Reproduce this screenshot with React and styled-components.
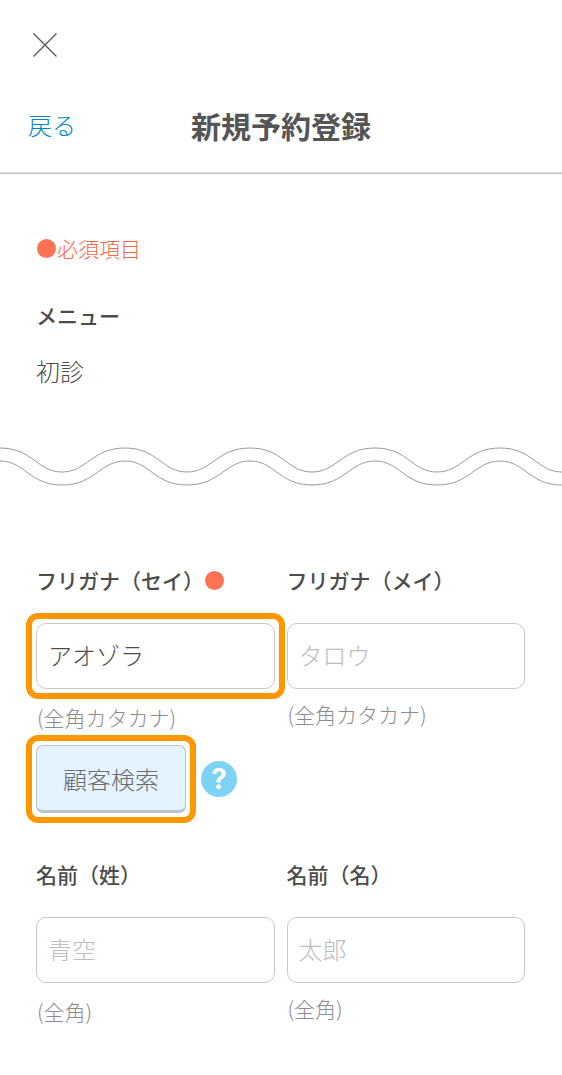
import React from "react";
import styled, { createGlobalStyle, css } from "styled-components";

const GlobalStyle = createGlobalStyle`
  *,
  *::before,
  *::after {
    box-sizing: border-box;
  }
  body {
    margin: 0;
    background-color: #fff;
    color: #4c4c4c;
    font-family: "Noto Sans CJK JP", sans-serif;
    font-weight: 300;
  }
  button,
  input {
    font: inherit;
    color: inherit;
  }
`;

const Page = styled.div`
  padding-bottom: 47px;
`;
const Header = styled.header`
  padding: 33px 28px 26px;
  border-bottom: 1px solid #b9c2c1;
  box-shadow: inset 0 -1px #dde2e1;
`;
const CloseButton = styled.button`
  display: block;
  width: 24px;
  height: 24px;
  margin-left: 5px;
  padding: 0;
  border: none;
  background: none;
  cursor: pointer;
  svg {
    display: block;
  }
`;
const TitleBar = styled.div`
  display: grid;
  grid-template-columns: 1fr auto 1fr;
  align-items: center;
  margin-top: 46px;
  line-height: 44px;
`;
const BackLink = styled.a`
  color: #0088c4;
  font-size: 24px;
  text-decoration: none;
`;
const Title = styled.h1`
  margin: 0;
  color: #555;
  font-size: 30px;
  font-weight: 700;
`;
const Section = styled.section`
  padding: ${props => props.$top}px 37px 0 36px;
`;
const RequiredNote = styled.p`
  display: flex;
  align-items: center;
  gap: 1px;
  margin: 0;
  padding-left: 1px;
  color: #ff6644;
  font-size: 21px;
  line-height: 32px;
`;
const RequiredDot = styled.span`
  flex: none;
  width: 19px;
  height: 19px;
  border-radius: 50%;
  background-color: #ff7254;
`;
const MenuTitle = styled.h2`
  margin: 35px 0 24px;
  font-size: 21px;
  font-weight: 500;
  line-height: 32px;
`;
const MenuValue = styled.p`
  margin: 0;
  font-size: 24px;
  line-height: 32px;
`;
const WaveSvg = styled.svg`
  display: block;
  width: 100%;
  height: 39px;
  margin-top: 60px;
`;
const FieldGrid = styled.div`
  display: grid;
  grid-template-columns: 1fr 1fr;
  gap: 45px 12px;
`;
const Label = styled.label`
  display: flex;
  align-items: center;
  gap: 1px;
  font-size: 21px;
  font-weight: 500;
  line-height: 32px;
  white-space: nowrap;
`;
const Highlight = styled.div`
  position: relative;
  ${props =>
    props.$active &&
    css`
      &::after {
        content: "";
        position: absolute;
        inset: -10px;
        border: 6px solid #ff9800;
        border-radius: 12px;
        pointer-events: none;
      }
    `}
`;
const InputBox = styled(Highlight)`
  margin-top: 27px;
`;
const TextInput = styled.input`
  display: block;
  width: 100%;
  height: 66px;
  padding: 0 12px 4px 11px;
  border: 1px solid #c8c8c8;
  border-radius: 10px;
  background-color: #fff;
  font-size: 24px;
  outline: none;
  &::placeholder {
    color: #bdbdbd;
    opacity: 1;
  }
`;
const Hint = styled.p`
  margin: ${props => props.$gap}px 0 0;
  padding-left: 1px;
  color: #8c8c8c;
  font-size: 21px;
  line-height: 32px;
`;
const SearchRow = styled.div`
  display: flex;
  align-items: center;
  gap: 15px;
  margin-top: 12px;
`;
const SearchButton = styled.button`
  display: block;
  width: 150px;
  height: 68px;
  padding: 0;
  border: 1px solid #b7c3cc;
  border-bottom-width: 3px;
  border-radius: 7px;
  background-color: #e5f3ff;
  color: #6c6c6c;
  font-size: 24px;
  cursor: pointer;
`;
const HelpButton = styled.button`
  width: 36px;
  height: 36px;
  padding: 0;
  border: none;
  border-radius: 50%;
  background-color: #7dd3f3;
  color: #fff;
  font-family: Inter, sans-serif;
  font-size: 28px;
  font-weight: 700;
  line-height: 36px;
  cursor: pointer;
`;

const Wave = () => (
  <WaveSvg aria-hidden="true">
    <defs>
      <pattern id="wave" width="125" height="39" patternUnits="userSpaceOnUse">
        <g fill="none" stroke="#999" strokeWidth="1">
          <path d="M0 1C33 1 37 25 62 25S92 1 125 1" />
          <path d="M0 14C25 14 29 38 62 38S100 14 125 14" />
        </g>
      </pattern>
    </defs>
    <rect width="100%" height="39" fill="url(#wave)" />
  </WaveSvg>
);

const Field = ({
  id,
  label,
  required,
  highlighted,
  hint,
  hintGap,
  children,
  ...inputProps
}) => (
  <div>
    <Label htmlFor={id}>
      {label}
      {required ? <RequiredDot /> : null}
    </Label>
    <InputBox $active={highlighted}>
      <TextInput id={id} type="text" {...inputProps} />
    </InputBox>
    <Hint $gap={hintGap}>{hint}</Hint>
    {children}
  </div>
);

const App = () => (
  <Page>
    <GlobalStyle />
    <Header>
      <CloseButton type="button" aria-label="閉じる">
        <svg width="24" height="24" viewBox="0 0 24 24">
          <path d="M0.5 0.5L23.5 23.5M23.5 0.5L0.5 23.5" stroke="#555" strokeWidth="1.3" />
        </svg>
      </CloseButton>
      <TitleBar>
        <BackLink href="#back">戻る</BackLink>
        <Title>新規予約登録</Title>
      </TitleBar>
    </Header>
    <main>
      <Section $top={58}>
        <RequiredNote>
          <RequiredDot />
          必須項目
        </RequiredNote>
        <MenuTitle>メニュー</MenuTitle>
        <MenuValue>初診</MenuValue>
      </Section>
      <Wave />
      <Section as="form" $top={78}>
        <FieldGrid>
          <Field
            id="kana-sei"
            label="フリガナ（セイ）"
            required
            highlighted
            defaultValue="アオゾラ"
            hint="(全角カタカナ)"
            hintGap={12}
          >
            <SearchRow>
              <Highlight $active>
                <SearchButton type="button">顧客検索</SearchButton>
              </Highlight>
              <HelpButton type="button" aria-label="ヘルプ">
                ?
              </HelpButton>
            </SearchRow>
          </Field>
          <Field
            id="kana-mei"
            label="フリガナ（メイ）"
            placeholder="タロウ"
            hint="(全角カタカナ)"
            hintGap={9}
          />
          <Field
            id="name-sei"
            label="名前（姓）"
            placeholder="青空"
            hint="(全角)"
            hintGap={12}
          />
          <Field
            id="name-mei"
            label="名前（名）"
            placeholder="太郎"
            hint="(全角)"
            hintGap={9}
          />
        </FieldGrid>
      </Section>
    </main>
  </Page>
);

export default App;
